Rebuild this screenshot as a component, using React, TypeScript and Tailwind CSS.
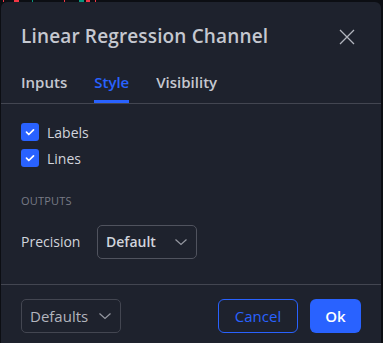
import React from "react";

const font = { fontFamily: '"Open Sans", "Noto Sans", sans-serif' };

function Check({ label }: { label: string }) {
  return (
    <label className="flex items-center gap-2 h-[26px]">
      <span className="flex items-center justify-center w-[18px] h-[18px] rounded-[3px] bg-[#2962ff]">
        <svg width="12" height="12" viewBox="0 0 12 12" fill="none">
          <path d="M2.5 6.2l2.3 2.3L9.5 3.8" stroke="#fff" strokeWidth="1.7" strokeLinecap="round" strokeLinejoin="round" />
        </svg>
      </span>
      <span className="text-[14px] text-[#d1d4dc]">{label}</span>
    </label>
  );
}

function Chevron() {
  return (
    <svg width="14" height="8" viewBox="0 0 14 8" fill="none">
      <path d="M1.5 1.5l5.5 5 5.5-5" stroke="#9598a1" strokeWidth="1.2" />
    </svg>
  );
}

export default function App() {
  return (
    <div className="w-[383px] h-[343px] bg-[#0c0e13] overflow-hidden" style={font}>
      {/* chart bits peeking above the dialog */}
      <div className="flex h-[2px]">
        <span className="ml-[3px] w-[1px] bg-[#f23645]" />
        <span className="ml-[10px] w-[5px] bg-[#f23645]" />
        <span className="ml-[13px] w-[1px] bg-[#089981]" />
        <span className="ml-[31px] w-[1px] bg-[#f23645]" />
        <span className="ml-[14px] w-[5px] bg-[#089981]" />
        <span className="ml-[2px] w-[4px] bg-[#f23645]" />
        <span className="ml-[5px] w-[1px] bg-[#f23645]" />
      </div>
      <div className="ml-[1px] w-[380px] h-[341px] bg-[#1e222d] rounded-t-[6px] flex flex-col">
        <div className="flex items-center justify-between pl-5 pr-[26px] pt-[16px] h-[53px]">
          <h1 className="text-[19px] font-semibold text-[#c5c8d0] tracking-[0.15px]">Linear Regression Channel</h1>
          <svg width="16" height="16" viewBox="0 0 16 16" fill="none">
            <path d="M1 1l14 14M15 1L1 15" stroke="#b2b5be" strokeWidth="1.3" />
          </svg>
        </div>
        <div className="flex items-end gap-[27px] pl-5 h-[49px] border-b border-[#434651]">
          <div className="pb-[10px] text-[15px] text-[#c5c8d0] font-semibold">Inputs</div>
          <div className="text-[15px] text-[#2962ff] font-semibold flex flex-col">
            <span className="pb-[7px]">Style</span>
            <span className="h-[3px] bg-[#2962ff]" />
          </div>
          <div className="pb-[10px] text-[15px] text-[#c5c8d0] font-semibold">Visibility</div>
        </div>
        <div className="flex-1 pl-5 pt-[15px]">
          <Check label="Labels" />
          <Check label="Lines" />
          <div className="mt-[22px] text-[11px] text-[#787b86] tracking-[0.2px]">OUTPUTS</div>
          <div className="flex items-center mt-[15px]">
            <span className="w-[76px] text-[14px] text-[#d1d4dc]">Precision</span>
            <div className="w-[100px] h-[34px] border border-[#50535e] rounded-[5px] flex items-center justify-between pl-[8px] pr-[8px]">
              <span className="text-[14px] font-semibold text-[#d1d4dc]">Default</span>
              <Chevron />
            </div>
          </div>
        </div>
        <div className="border-t border-[#434651] h-[59px] flex items-start pt-[14px] px-5">
          <div className="w-[100px] h-[34px] border border-[#434651] rounded-[5px] flex items-center justify-between pl-[8px] pr-[8px]">
            <span className="text-[15px] font-medium text-[#b2b5be]">Defaults</span>
            <Chevron />
          </div>
          <div className="flex-1" />
          <button className="w-[80px] h-[34px] border border-[#2962ff] rounded-[6px] text-[15px] text-[#2962ff]">Cancel</button>
          <button className="ml-[12px] w-[51px] h-[34px] bg-[#2962ff] rounded-[6px] text-[15px] font-semibold text-white">Ok</button>
        </div>
      </div>
    </div>
  );
}
